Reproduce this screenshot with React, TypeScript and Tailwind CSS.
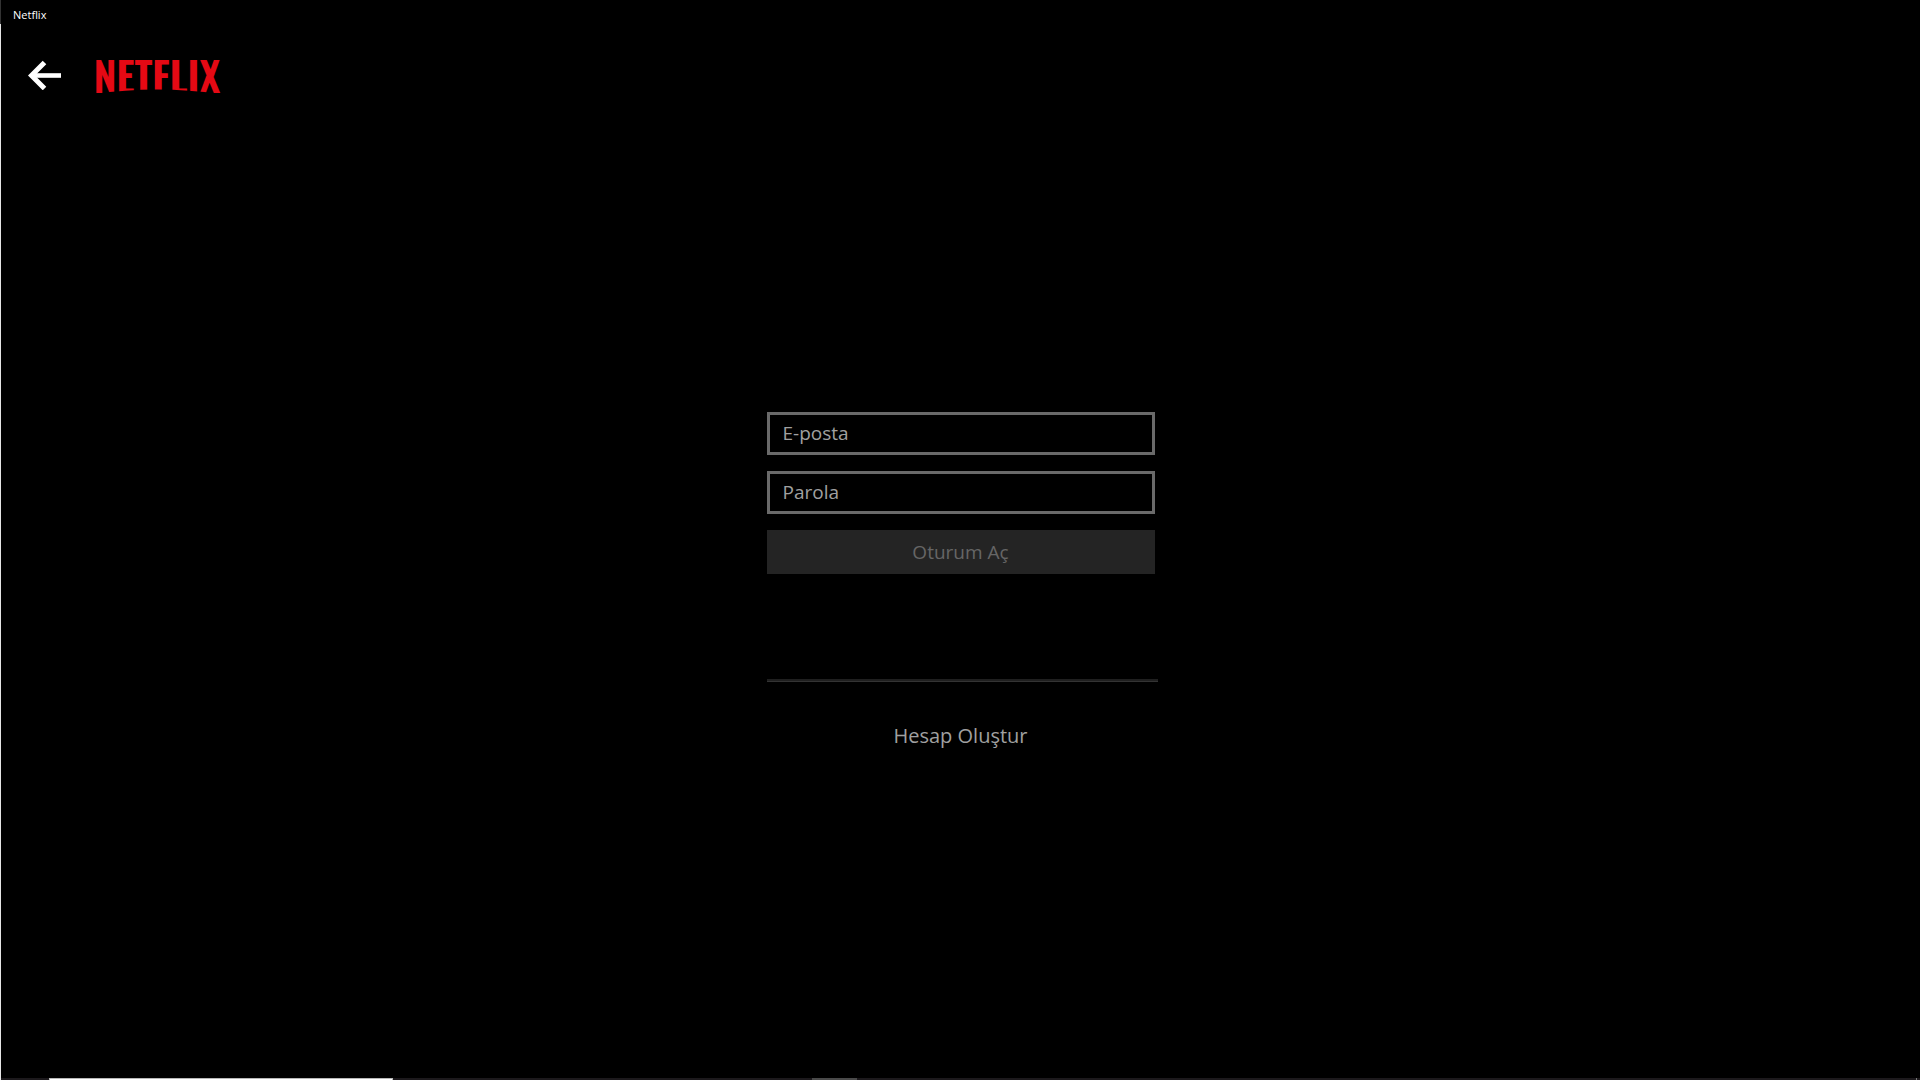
function BackArrow() {
  return (
    <svg viewBox="0 0 34 30" className="h-[30px] w-[34px]" fill="none" aria-hidden="true">
      <path d="M33 15.500H4" stroke="#fff" strokeWidth="4.600" />
      <path d="M16.500 2.500L3.500 15.500l13 13" stroke="#fff" strokeWidth="5" />
    </svg>
  );
}

function Logo() {
  return (
    <svg viewBox="0 0 126 34" className="h-[34px] w-[126px] overflow-visible" role="img" aria-label="Netflix">
      <text
        x="63"
        y="33"
        textAnchor="middle"
        className="fill-[#e50914] font-['Oswald','Roboto_Condensed',sans-serif] text-[41px] font-semibold"
      >
        NETFLIX
      </text>
      <path d="M0 34Q63 25 126 34V36H0Z" fill="#000" />
    </svg>
  );
}

function Field({ id, label, type }: { id: string; label: string; type: string }) {
  return (
    <input
      id={id}
      type={type}
      aria-label={label}
      placeholder={label}
      className="h-[43px] w-full border-3 border-[#6a6a6a] bg-black px-[13px] pb-px text-[19px] text-white outline-none placeholder:text-[#a0a0a0]"
    />
  );
}

function TaskbarEdge() {
  return (
    <div className="flex h-0.5 border-l border-[#e6e6e6] bg-[#1c191c]" aria-hidden="true">
      <div className="w-12" />
      <div className="w-[344px] border border-b-0 border-[#b8b8b8] bg-white" />
      <div className="w-[419px]" />
      <div className="w-[45px] bg-[#4a4a4a]" />
      <div className="flex-1" />
      <div className="mr-[3px] w-px bg-[#777]" />
    </div>
  );
}

export default function App() {
  return (
    <div className="flex min-h-screen flex-col bg-black font-['Open_Sans','Noto_Sans',sans-serif]">
      <div className="border-l border-[#333] px-3 pt-[7px] pb-px text-[11px] leading-4 text-white">Netflix</div>
      <div className="flex flex-1 flex-col border-l border-[#e6e6e6]">
        <header className="mt-9 flex items-start gap-8 pl-[27px]">
          <button type="button" aria-label="Geri">
            <BackArrow />
          </button>
          <Logo />
        </header>

        <main className="flex flex-1 flex-col items-center justify-center pb-2.5">
          <form className="flex w-[388px] flex-col gap-4" onSubmit={(e) => e.preventDefault()}>
            <Field id="email" label="E-posta" type="email" />
            <Field id="password" label="Parola" type="password" />
            <button type="submit" disabled className="h-11 bg-[#242424] text-[19px] text-[#666]">
              Oturum Aç
            </button>
          </form>
          <div className="flex w-[388px] flex-col">
            <hr className="mt-[105px] -mr-[3px] h-[3px] border-t-0 border-b border-[#333] bg-[#1f1f1f]" />
            <a href="#signup" className="mt-10 self-center text-xl leading-7 text-[#a0a0a0]">
              Hesap Oluştur
            </a>
          </div>
        </main>
      </div>

      <TaskbarEdge />
    </div>
  );
}
